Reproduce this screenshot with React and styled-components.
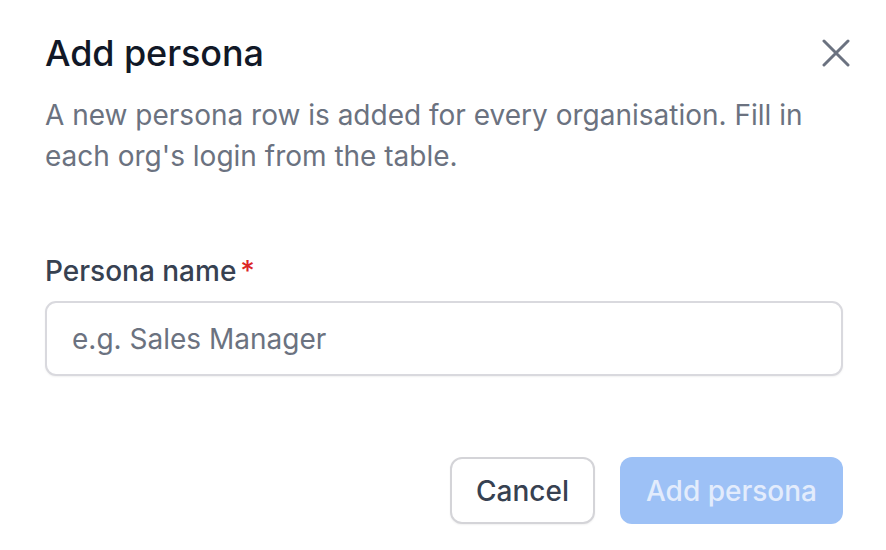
import React, { useState } from 'react';
import styled, { createGlobalStyle } from 'styled-components';

const GlobalStyle = createGlobalStyle`
  html, body {
    margin: 0;
    padding: 0;
    background: #ffffff;
  }
  body {
    font-family: Inter, "Noto Sans", "Liberation Sans", sans-serif;
    -webkit-font-smoothing: antialiased;
  }
  * {
    box-sizing: border-box;
  }
`;

const Dialog = styled.div`
  width: 886px;
  height: 550px;
  background: #ffffff;
  padding: 32px 36px 0 45px;
  display: flex;
  flex-direction: column;
`;

const Header = styled.div`
  display: flex;
  align-items: flex-start;
  justify-content: space-between;
`;

const Title = styled.h2`
  margin: 0;
  font-size: 36px;
  line-height: 42px;
  font-weight: 500;
  color: #111827;
  letter-spacing: -0.1px;
`;

const CloseButton = styled.button`
  background: none;
  border: none;
  padding: 0;
  margin: 0;
  width: 28px;
  height: 42px;
  display: flex;
  align-items: center;
  justify-content: center;
  color: #6b7280;
  cursor: pointer;
`;

const Description = styled.p`
  margin: 21px 7px 0 0;
  font-size: 28px;
  line-height: 41px;
  color: #6b7280;
`;

const Field = styled.div`
  display: flex;
  flex-direction: column;
  margin: 76px 7px 0 0;
`;

const Label = styled.label`
  font-size: 28px;
  line-height: 36px;
  font-weight: 500;
  color: #374151;
`;

const Required = styled.span`
  color: #dc2626;
  margin-left: 4px;
`;

const Input = styled.input`
  margin-top: 12px;
  height: 75px;
  width: 100%;
  padding: 0 25px;
  border: 2px solid #d9d9de;
  border-radius: 11px;
  font-family: inherit;
  font-size: 28px;
  color: #111827;
  background: #ffffff;
  box-shadow: 0 1px 2px rgba(0, 0, 0, 0.06);
  outline: none;

  &::placeholder {
    color: #6b7280;
  }
`;

const Footer = styled.div`
  display: flex;
  justify-content: flex-end;
  gap: 25px;
  margin: 81px 7px 0 0;
`;

const Button = styled.button`
  height: 67px;
  padding: 0 24px;
  border-radius: 12px;
  font-family: inherit;
  font-size: 28px;
  font-weight: 500;
  cursor: pointer;
  border: 2px solid ${p => (p.$primary ? 'transparent' : '#d4d4d8')};
  background: ${p => (p.$primary ? (p.disabled ? '#9dc1f6' : '#2563eb') : '#ffffff')};
  color: ${p => (p.$primary ? (p.disabled ? '#e3ecfc' : '#ffffff') : '#374151')};
  box-shadow: ${p => (p.$primary ? 'none' : '0 1px 2px rgba(0, 0, 0, 0.06)')};

  &:disabled {
    cursor: not-allowed;
  }
`;

const XIcon = () => (
  <svg width="28" height="28" viewBox="0 0 28 28" fill="none" stroke="currentColor" strokeWidth="3" strokeLinecap="round">
    <path d="M2 2L26 26M26 2L2 26" />
  </svg>
);

export default function App() {
  const [name, setName] = useState('');

  return (
    <>
      <GlobalStyle />
      <Dialog>
        <Header>
          <Title>Add persona</Title>
          <CloseButton aria-label="Close">
            <XIcon />
          </CloseButton>
        </Header>
        <Description>
          A new persona row is added for every organisation. Fill in each org's login from the table.
        </Description>
        <Field>
          <Label htmlFor="persona-name">
            Persona name<Required>*</Required>
          </Label>
          <Input
            id="persona-name"
            placeholder="e.g. Sales Manager"
            value={name}
            onChange={e => setName(e.target.value)}
          />
        </Field>
        <Footer>
          <Button>Cancel</Button>
          <Button $primary disabled={!name.trim()}>Add persona</Button>
        </Footer>
      </Dialog>
    </>
  );
}
